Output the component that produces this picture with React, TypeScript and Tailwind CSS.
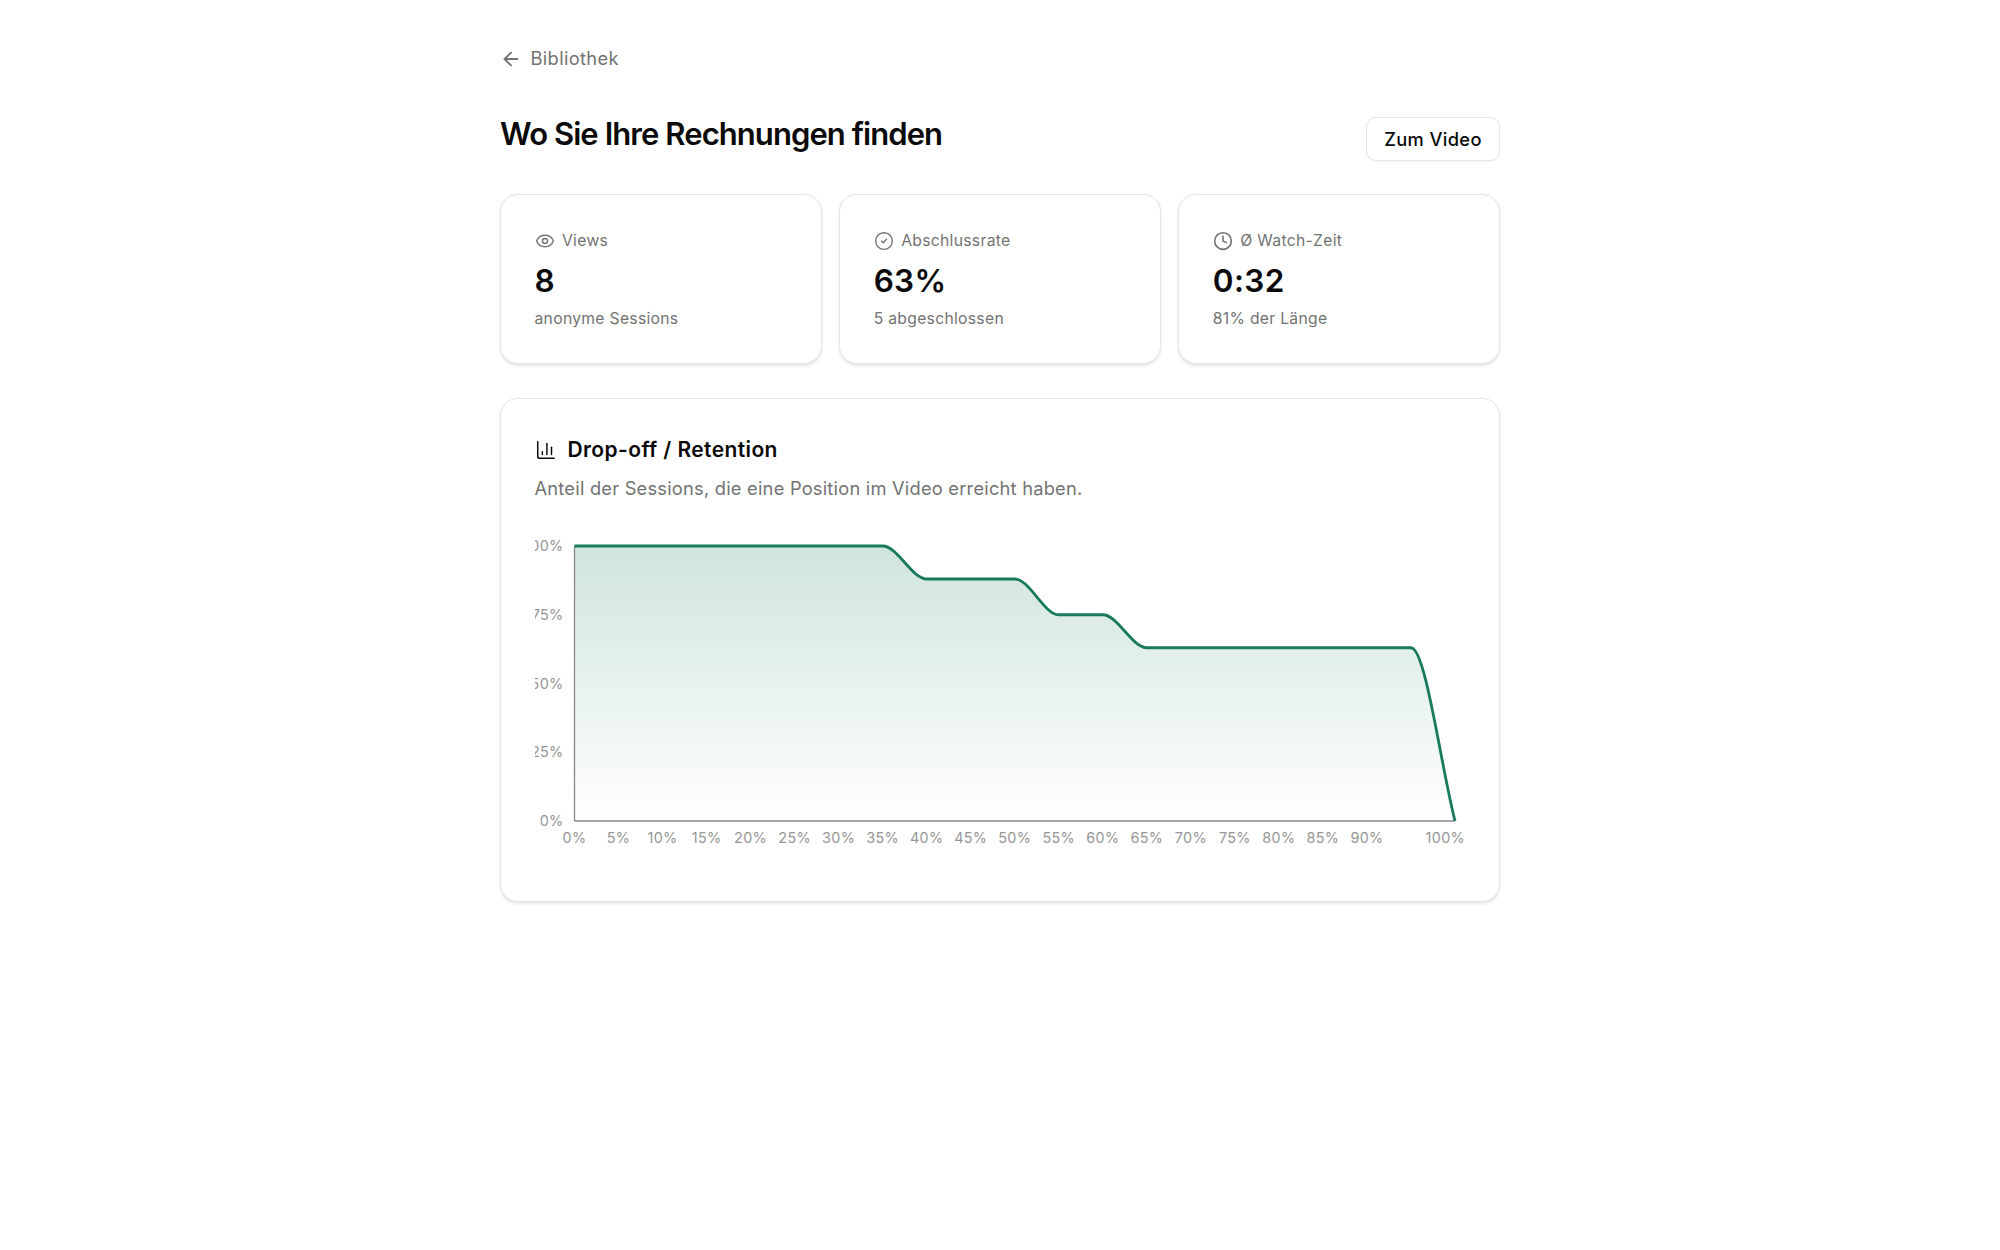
import { ArrowLeft, ChartColumn, CircleCheck, Clock, Eye } from "lucide-react";

const X0 = 39.5;
const X1 = 920;
const Y0 = 12;
const Y1 = 287;
const W = 931;
const H = 330;

const values = [1, 1, 1, 1, 1, 1, 1, 1, 0.88, 0.88, 0.88, 0.75, 0.75, 0.63, 0.63, 0.63, 0.63, 0.63, 0.63, 0.63, 0];
const pts = values.map((v, i) => [X0 + ((X1 - X0) * i) / 20, Y1 - (Y1 - Y0) * v]);

function monotonePath(p: number[][]) {
  const n = p.length;
  const h = (X1 - X0) / 20;
  const s = p.slice(0, -1).map((a, i) => (p[i + 1][1] - a[1]) / h);
  const t = p.map((_, i) => {
    if (i === 0) return s[0];
    if (i === n - 1) return s[n - 2];
    const a = s[i - 1];
    const b = s[i];
    const sign = (Math.sign(a) || 1) + (Math.sign(b) || 1);
    return sign * 0.5 * Math.min(Math.abs(a), Math.abs(b), 0.5 * Math.abs(a + b));
  });
  let d = `M${p[0][0]},${p[0][1]}`;
  for (let i = 0; i < n - 1; i++) {
    const c = h / 3;
    d += `C${p[i][0] + c},${p[i][1] + c * t[i]} ${p[i + 1][0] - c},${p[i + 1][1] - c * t[i + 1]} ${p[i + 1][0]},${p[i + 1][1]}`;
  }
  return d;
}

const linePath = monotonePath(pts);
const areaPath = `${linePath}L${X1},${Y1}L${X0},${Y1}Z`;

const xTicks = [0, 5, 10, 15, 20, 25, 30, 35, 40, 45, 50, 55, 60, 65, 70, 75, 80, 85, 90];
const yTicks = [
  ["100%", Y0],
  ["75%", Y0 + (Y1 - Y0) * 0.25],
  ["50%", Y0 + (Y1 - Y0) * 0.5],
  ["25%", Y0 + (Y1 - Y0) * 0.75],
  ["0%", Y1],
] as const;

function Chart() {
  return (
    <svg width={W} height={H} viewBox={`0 0 ${W} ${H}`} className="mt-[33px] block" style={{ fontFamily: "Inter, sans-serif", letterSpacing: "0.02em" }}>
      <defs>
        <linearGradient id="fill" x1="0" y1="0" x2="0" y2="1">
          <stop offset="0%" stopColor="#147a5c" stopOpacity="0.2" />
          <stop offset="100%" stopColor="#147a5c" stopOpacity="0" />
        </linearGradient>
      </defs>
      <path d={areaPath} fill="url(#fill)" />
      <line x1={X0} y1={Y0} x2={X0} y2={Y1} stroke="#888888" strokeWidth="1.3" />
      <line x1={X0} y1={Y1} x2={X1} y2={Y1} stroke="#888888" strokeWidth="1.3" />
      <path d={linePath} fill="none" stroke="#1a7a5e" strokeWidth="2.8" />
      {yTicks.map(([t, y]) => (
        <text key={t} x={28.5} y={y + 5} textAnchor="end" fontSize="14.4" fill="#969696">
          {t}
        </text>
      ))}
      {xTicks.map((t) => (
        <text key={t} x={X0 + ((X1 - X0) * t) / 100} y={308.5} textAnchor="middle" fontSize="14.4" fill="#969696">
          {t}%
        </text>
      ))}
      <text x={930} y={308.5} textAnchor="end" fontSize="14.4" fill="#969696">
        100%
      </text>
    </svg>
  );
}

function Stat({ icon, label, value, sub }: { icon: React.ReactNode; label: string; value: string; sub: string }) {
  return (
    <div className="h-[170px] rounded-[18px] border-[1.5px] border-[#e5e5e5] bg-white px-[33.5px] pt-[35.5px] shadow-[0_1.5px_3px_rgba(0,0,0,0.1)]">
      <div className="flex h-[20px] items-center gap-[7.5px] text-[15.7px] tracking-[0.019em] text-[#737373]">
        {icon}
        <span>{label}</span>
      </div>
      <div className="mt-[10px] text-[31.5px] leading-[40px] font-semibold tracking-[0.01em] text-[#0a0a0a]">{value}</div>
      <div className="mt-[8px] text-[15.7px] leading-[20px] tracking-[0.019em] text-[#737373]">{sub}</div>
    </div>
  );
}

export default function App() {
  return (
    <div className="min-h-[1250px] bg-white" style={{ fontFamily: "Inter, sans-serif" }}>
      <div className="mx-auto w-[1000px] pt-[46px]">
        <div className="flex h-[26px] items-center gap-[8.5px] text-[18.3px] tracking-[0.019em] text-[#737373]">
          <ArrowLeft size={22} strokeWidth={2} />
          <span>Bibliothek</span>
        </div>
        <div className="mt-[45px] flex h-[43px] items-start justify-between">
          <h1 className="-mt-[3px] text-[31px] leading-[40px] font-semibold tracking-[-0.03em] text-[#0a0a0a]">
            Wo Sie Ihre Rechnungen finden
          </h1>
          <button className="h-[44px] w-[134px] rounded-[10px] border-[1.5px] border-[#e5e5e5] bg-white pt-[1px] text-[18.3px] tracking-[0.019em] font-medium text-[#0a0a0a] shadow-[0_1px_2px_rgba(0,0,0,0.05)]">
            Zum Video
          </button>
        </div>
        <div className="mt-[34px] grid grid-cols-3 gap-[17.5px]">
          <Stat icon={<Eye size={20} strokeWidth={1.7} />} label="Views" value="8" sub="anonyme Sessions" />
          <Stat icon={<CircleCheck size={20} strokeWidth={1.7} />} label="Abschlussrate" value="63%" sub="5 abgeschlossen" />
          <Stat icon={<Clock size={20} strokeWidth={1.9} />} label="Ø Watch-Zeit" value="0:32" sub="81% der Länge" />
        </div>
        <div className="mt-[34px] h-[504px] rounded-[18px] border-[1.5px] border-[#e5e5e5] bg-white px-[33.5px] pt-[38px] shadow-[0_1.5px_3px_rgba(0,0,0,0.1)]">
          <div className="flex h-[26px] items-center gap-[11px] text-[21px] tracking-[0.019em] font-semibold text-[#0a0a0a]">
            <ChartColumn size={22} strokeWidth={1.6} />
            <span>Drop-off / Retention</span>
          </div>
          <p className="mt-[12px] text-[18.3px] leading-[26px] tracking-[0.012em] text-[#737373]">
            Anteil der Sessions, die eine Position im Video erreicht haben.
          </p>
          <Chart />
        </div>
      </div>
    </div>
  );
}
